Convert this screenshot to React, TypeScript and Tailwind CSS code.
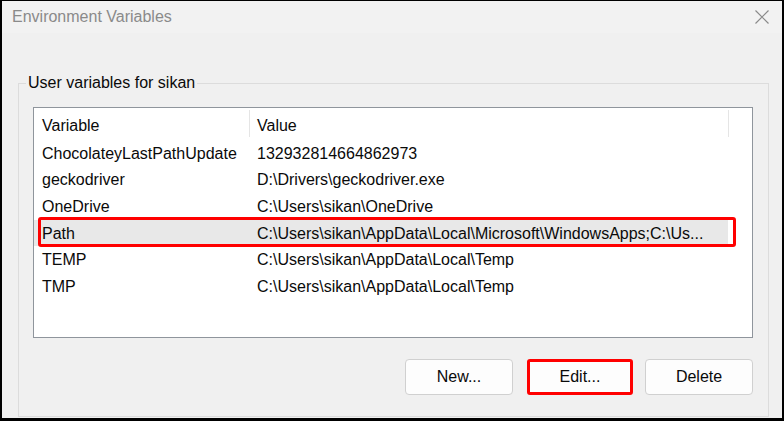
import React from "react";

const rows: { name: string; value: string; hl?: boolean }[] = [
  { name: "ChocolateyLastPathUpdate", value: "132932814664862973" },
  { name: "geckodriver", value: "D:\\Drivers\\geckodriver.exe" },
  { name: "OneDrive", value: "C:\\Users\\sikan\\OneDrive" },
  {
    name: "Path",
    value: "C:\\Users\\sikan\\AppData\\Local\\Microsoft\\WindowsApps;C:\\Us...",
    hl: true,
  },
  { name: "TEMP", value: "C:\\Users\\sikan\\AppData\\Local\\Temp" },
  { name: "TMP", value: "C:\\Users\\sikan\\AppData\\Local\\Temp" },
];

export default function App() {
  return (
    <div
      className="w-[784px] h-[421px] bg-[#f0f0f0] border-black border-t-[1px] border-l-2 border-r-2 border-b-[3px] flex flex-col overflow-hidden text-[16px] text-[#0a0a0a]"
      style={{ fontFamily: '"Liberation Sans", Arial, sans-serif' }}
    >
      {/* title bar */}
      <div className="h-[32px] shrink-0 flex items-center justify-between pl-[10px] pr-[13px] bg-[#f2f2f2]">
        <span className="text-[#8a8a8a] leading-none">Environment Variables</span>
        <svg width="14" height="14" viewBox="0 0 14 14" className="text-[#8a8a8a]">
          <path d="M0.5 0.5 L13.5 13.5 M13.5 0.5 L0.5 13.5" stroke="currentColor" strokeWidth="1.2" fill="none" />
        </svg>
      </div>

      {/* body */}
      <div className="flex-1 pl-[16px] pr-[13px] pt-[41px]">
        <fieldset className="border border-[#dcdcdc] pl-[14px] pr-[15px] pb-[21px]">
          <legend className="-ml-[7px] px-[2px] leading-[18px]">User variables for sikan</legend>

          {/* list box */}
          <div className="mt-[15px] h-[231px] bg-white border border-[#8f959c] pt-[2px]">
            <div className="flex h-[30px] items-start">
              <div className="w-[215px] h-[27px] flex items-center pt-[4px] pl-[8px]">Variable</div>
              <div className="w-[479px] h-[27px] flex items-center pt-[4px] pl-[7px] border-l border-[#e5e5e5]">Value</div>
              <div className="flex-1 h-[27px] border-l border-[#e5e5e5]" />
            </div>
            {rows.map((r) => (
              <div key={r.name} className="relative flex h-[26.6px] items-center">
                <div className={`flex h-full items-center pt-[1px] ${r.hl ? "bg-[#e8e8e8]" : ""}`}>
                  <div className="w-[215px] pl-[8px] whitespace-nowrap">{r.name}</div>
                  <div className="w-[479px] pl-[8px] whitespace-nowrap overflow-hidden">{r.value}</div>
                </div>
                {r.hl && (
                  <span className="absolute left-[4px] right-[16px] top-[-3px] bottom-[-1px] border-[3px] border-[#ff0000] rounded-[3px]" />
                )}
              </div>
            ))}
          </div>

          {/* buttons */}
          <div className="mt-[21px] flex justify-end gap-[12px]">
            <button className="w-[108px] h-[36px] mr-[2px] bg-[#fdfdfd] border border-[#d0d0d0] rounded-[4px] flex items-center justify-center">
              New...
            </button>
            <button className="w-[106px] h-[36px] bg-[#fdfdfd] border-[3px] border-[#ff0000] rounded-[3px] flex items-center justify-center">
              Edit...
            </button>
            <button className="w-[108px] h-[36px] bg-[#fdfdfd] border border-[#d0d0d0] rounded-[4px] flex items-center justify-center">
              Delete
            </button>
          </div>
        </fieldset>
      </div>
    </div>
  );
}
